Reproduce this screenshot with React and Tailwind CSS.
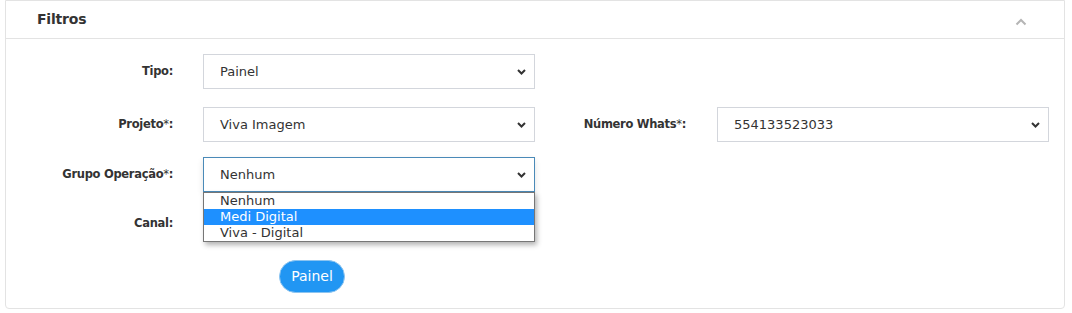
import React from "react";

const Chevron = ({ className = "" }) => (
  <svg width="9" height="6" viewBox="0 0 9 6" className={className}>
    <path d="M1 1 L4.5 4.5 L8 1" fill="none" stroke="#333" strokeWidth="2" />
  </svg>
);

function FakeSelect({ value, focused = false, children }) {
  return (
    <div
      className={`relative flex h-[35px] w-[332px] items-center border bg-white pl-[16px] pr-[8px] text-[13px] text-[#333] ${
        focused ? "border-[#4a8ab8] shadow-[0_3px_6px_rgba(0,0,0,0.12)]" : "border-[#d3d6dc]"
      }`}
    >
      <span className="flex-1">{value}</span>
      <Chevron />
      {children}
    </div>
  );
}

function Label({ children, w }) {
  return (
    <div className={`${w} text-right text-[11.5px] font-bold tracking-[-0.3px] text-[#333]`}>{children}</div>
  );
}

function Req() {
  return <span className="font-normal text-[#333]">*</span>;
}

export default function App() {
  return (
    <div className="h-[313px] w-[1072px] bg-white font-['DejaVu_Sans','Verdana',sans-serif]">
      <div className="ml-[5px] w-[1060px] rounded-b-[4px] border border-[#e3e3e3]">
        <div className="flex h-[38px] items-center justify-between border-b border-[#e3e3e3] pl-[31px] pr-[37px]">
          <span className="text-[14px] font-bold tracking-[-0.2px] text-[#333]">Filtros</span>
          <svg width="12" height="8" viewBox="0 0 12 8" className="mt-[4px]">
            <path d="M1.5 6.5 L6 2 L10.5 6.5" fill="none" stroke="#b5b5b5" strokeWidth="2" />
          </svg>
        </div>
        <div className="pb-[15px] pt-[15px]">
          {/* Tipo */}
          <div className="flex items-center">
            <Label w="w-[167px]">Tipo:</Label>
            <div className="ml-[30px]">
              <FakeSelect value="Painel" />
            </div>
          </div>
          {/* Projeto + Numero */}
          <div className="mt-[18px] flex items-center">
            <Label w="w-[167px]">
              Projeto<Req />:
            </Label>
            <div className="ml-[30px]">
              <FakeSelect value="Viva Imagem" />
            </div>
            <Label w="w-[151px]">
              Número Whats<Req />:
            </Label>
            <div className="ml-[31px]">
              <FakeSelect value="554133523033" />
            </div>
          </div>
          {/* Grupo Operacao */}
          <div className="relative z-10 mt-[15px] flex items-center">
            <Label w="w-[167px]">
              Grupo Operação<Req />:
            </Label>
            <div className="ml-[30px]">
              <FakeSelect value="Nenhum" focused>
                <div className="absolute left-[-1px] top-[34px] w-[332px] border border-[#767676] bg-white text-[13px] leading-[16px] text-[#333] shadow-[2px_3px_5px_rgba(0,0,0,0.3)]">
                  <div className="pl-[16px]">Nenhum</div>
                  <div className="bg-[#1e90ff] pl-[16px] text-white">Medi Digital</div>
                  <div className="pl-[16px]">Viva - Digital</div>
                </div>
              </FakeSelect>
            </div>
          </div>
          {/* Canal */}
          <div className="mt-[14px] flex items-center">
            <Label w="w-[167px]">Canal:</Label>
            <div className="ml-[30px]">
              <FakeSelect value="" />
            </div>
          </div>
          {/* Button */}
          <div className="mt-[19px] flex">
            <button className="ml-[273px] h-[33px] w-[66px] rounded-full border border-[#8cc4f0] bg-[#2196f3] text-[14px] text-white">
              Painel
            </button>
          </div>
        </div>
      </div>
    </div>
  );
}
